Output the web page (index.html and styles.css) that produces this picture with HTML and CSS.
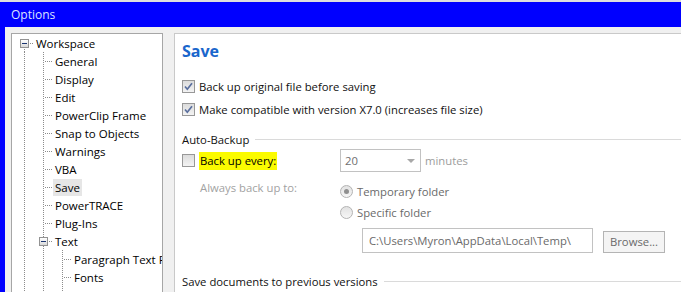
FILE: index.html
```html
<!DOCTYPE html>
<html>
<head>
    <title>Options</title>
    <link rel="stylesheet" href="styles.css">
</head>
<body>
    <div class="window">
        <div class="titlebar">Options</div>
        <div class="frame">
            <div class="tree">
                <div class="row"><span class="cell root-toggle"><span class="box"></span></span><span class="label">Workspace</span></div>
                <div class="row"><span class="cell vline"></span><span class="cell tee"></span><span class="label">General</span></div>
                <div class="row"><span class="cell vline"></span><span class="cell tee"></span><span class="label">Display</span></div>
                <div class="row"><span class="cell vline"></span><span class="cell tee"></span><span class="label">Edit</span></div>
                <div class="row"><span class="cell vline"></span><span class="cell tee"></span><span class="label">PowerClip Frame</span></div>
                <div class="row"><span class="cell vline"></span><span class="cell tee"></span><span class="label">Snap to Objects</span></div>
                <div class="row"><span class="cell vline"></span><span class="cell tee"></span><span class="label">Warnings</span></div>
                <div class="row"><span class="cell vline"></span><span class="cell tee"></span><span class="label">VBA</span></div>
                <div class="row"><span class="cell vline"></span><span class="cell tee"></span><span class="label selected">Save</span></div>
                <div class="row"><span class="cell vline"></span><span class="cell tee"></span><span class="label">PowerTRACE</span></div>
                <div class="row"><span class="cell vline"></span><span class="cell tee"></span><span class="label">Plug-Ins</span></div>
                <div class="row"><span class="cell vline"></span><span class="cell tee"><span class="box"></span></span><span class="label">Text</span></div>
                <div class="row"><span class="cell vline"></span><span class="cell vline"></span><span class="cell tee"></span><span class="label">Paragraph Text Frame</span></div>
                <div class="row"><span class="cell vline"></span><span class="cell vline"></span><span class="cell tee"></span><span class="label">Fonts</span></div>
                <div class="row"><span class="cell vline"></span><span class="cell vline"></span><span class="cell tee"></span><span class="label">Spelling</span></div>
            </div>

            <div class="panel">
                <div class="heading">Save</div>

                <div class="check-row first">
                    <span class="checkbox"><svg width="13" height="13" viewBox="0 0 13 13"><path d="M3 6.5 L5.3 9.2 L10 3.2" fill="none" stroke="#5a6f9e" stroke-width="1.7"/></svg></span>
                    <span>Back up original file before saving</span>
                </div>
                <div class="check-row">
                    <span class="checkbox"><svg width="13" height="13" viewBox="0 0 13 13"><path d="M3 6.5 L5.3 9.2 L10 3.2" fill="none" stroke="#5a6f9e" stroke-width="1.7"/></svg></span>
                    <span>Make compatible with version X7.0 (increases file size)</span>
                </div>

                <div class="section-title auto">Auto-Backup<span class="rule"></span></div>

                <div class="backup">
                    <div class="col-left">
                        <div class="every">
                            <span class="checkbox"></span>
                            <span class="highlight">Back up every:</span>
                        </div>
                        <div class="always">Always back up to:</div>
                    </div>
                    <div class="col-right">
                        <div class="every">
                            <div class="combo"><span>20</span><span class="arrow"></span></div>
                            <span class="muted">minutes</span>
                        </div>
                        <div class="radio-row top"><span class="radio on"></span><span>Temporary folder</span></div>
                        <div class="radio-row"><span class="radio"></span><span>Specific folder</span></div>
                        <div class="path-row">
                            <div class="path">C:\Users\Myron\AppData\Local\Temp\</div>
                            <div class="browse">Browse...</div>
                        </div>
                    </div>
                </div>

                <div class="section-title previous">Save documents to previous versions<span class="rule"></span></div>
            </div>
        </div>
    </div>
</body>
</html>
```

FILE: styles.css
```css
body {
    margin: 0;
    background-color: #dedede;
    font-family: "Open Sans", Arial, sans-serif;
    font-size: 11.3px;
    color: #111;
}
.window {
    margin-top: 2px;
    height: 290px;
    display: flex;
    flex-direction: column;
    overflow: hidden;
}
.titlebar {
    height: 25px;
    line-height: 25px;
    padding-left: 11px;
    background-color: #0000ff;
    color: #dbe3ff;
    font-size: 12px;
}
.frame {
    flex: 1;
    display: flex;
    gap: 11px;
    min-height: 0;
    padding: 6px 0 0 6px;
    background-color: #f0f0f0;
    border-left: 5px solid #0000ff;
}

/* tree */
.tree {
    width: 152px;
    flex-shrink: 0;
    box-sizing: border-box;
    border: 1px solid #a6a6a6;
    border-bottom: none;
    background-color: #fff;
    overflow: hidden;
    color: #000;
    font-size: 11.5px;
}
.row {
    display: flex;
    align-items: center;
    height: 18px;
    padding-left: 3px;
    white-space: nowrap;
}
.cell {
    width: 19px;
    height: 18px;
    flex-shrink: 0;
    display: flex;
    align-items: center;
    background-repeat: no-repeat;
}
.vline {
    background-image: repeating-linear-gradient(to bottom, #8c8c8c 0 1px, transparent 1px 2px);
    background-size: 1px 100%;
    background-position: 9px 0;
}
.tee {
    background-image:
        repeating-linear-gradient(to bottom, #8c8c8c 0 1px, transparent 1px 2px),
        repeating-linear-gradient(to right, #8c8c8c 0 1px, transparent 1px 2px);
    background-size: 1px 100%, 9px 1px;
    background-position: 9px 0, 11px 9px;
}
.root-toggle {
    background-image:
        repeating-linear-gradient(to bottom, #8c8c8c 0 1px, transparent 1px 2px),
        repeating-linear-gradient(to right, #8c8c8c 0 1px, transparent 1px 2px);
    background-size: 1px 9px, 9px 1px;
    background-position: 9px 9px, 11px 9px;
}
.box {
    width: 9px;
    height: 9px;
    margin-left: 5px;
    box-sizing: border-box;
    border: 1px solid #929292;
    background: linear-gradient(#fff, #d9d9d9);
    display: flex;
    align-items: center;
    justify-content: center;
}
.box::after {
    content: "";
    width: 5px;
    height: 1px;
    background-color: #1b3570;
}
.label {
    padding: 0 2px;
    line-height: 17px;
}
.selected {
    background-color: #e6e6e6;
}

/* right panel */
.panel {
    flex: 1;
    min-width: 0;
    padding: 7px 0 0 7px;
    border: 1px solid #c9c9c9;
    border-right: none;
    border-bottom: none;
    background-color: #fff;
    overflow: hidden;
}
.heading {
    height: 20px;
    line-height: 20px;
    font-size: 16px;
    font-weight: bold;
    color: #1a66cc;
}
.check-row {
    display: flex;
    align-items: center;
    gap: 4px;
    height: 23px;
}
.check-row.first {
    margin-top: 14px;
}
.checkbox {
    width: 13px;
    height: 13px;
    box-sizing: border-box;
    flex-shrink: 0;
    border: 1px solid #989898;
    background: linear-gradient(#dcdcdc, #f3f3f3);
    display: flex;
}
.checkbox svg {
    margin: -1px;
}
.section-title {
    display: flex;
    align-items: center;
    height: 18px;
    white-space: nowrap;
}
.section-title.auto {
    margin-top: 9px;
}
.section-title.previous {
    margin-top: 19px;
}
.rule {
    flex: 1;
    margin-left: 6px;
    border-top: 1px solid #dadada;
}

.backup {
    display: flex;
    margin-top: 1px;
}
.col-left {
    width: 158px;
    flex-shrink: 0;
}
.every {
    display: flex;
    align-items: center;
    gap: 4px;
    height: 23px;
}
.highlight {
    background-color: #fbfb00;
    padding: 0 1px;
    line-height: 18px;
    color: #000;
}
.always {
    margin-top: 9px;
    padding-left: 18px;
    line-height: 13px;
    color: #a2a2a2;
}
.combo {
    width: 81px;
    height: 23px;
    box-sizing: border-box;
    border: 1px solid #c2c2c2;
    display: flex;
    align-items: center;
    justify-content: space-between;
    padding: 0 5px 0 4px;
    color: #6f6f6f;
}
.arrow {
    width: 0;
    height: 0;
    border-left: 4px solid transparent;
    border-right: 4px solid transparent;
    border-top: 4px solid #a8a8a8;
}
.muted {
    color: #9c9c9c;
}
.radio-row {
    display: flex;
    align-items: center;
    gap: 4px;
    height: 21px;
    color: #6a6a6a;
}
.radio-row.top {
    margin-top: 9px;
}
.radio {
    width: 13px;
    height: 13px;
    box-sizing: border-box;
    border: 1px solid #b3b3b3;
    border-radius: 50%;
    background: linear-gradient(#e2e2e2, #f6f6f6);
    display: flex;
    align-items: center;
    justify-content: center;
}
.radio.on::after {
    content: "";
    width: 5px;
    height: 5px;
    border-radius: 50%;
    background-color: #8f8f8f;
}
.path-row {
    display: flex;
    align-items: flex-start;
    gap: 10px;
    margin-top: 5px;
    padding-left: 22px;
}
.path {
    width: 231px;
    height: 25px;
    box-sizing: border-box;
    border: 1px solid #c2c2c2;
    padding-left: 6px;
    line-height: 23px;
    color: #6a6a6a;
    white-space: nowrap;
    overflow: hidden;
}
.browse {
    width: 62px;
    height: 22px;
    margin-top: 3px;
    box-sizing: border-box;
    border: 1px solid #b4b4b4;
    background-color: #f4f4f4;
    line-height: 20px;
    text-align: center;
    color: #6a6a6a;
}
```
